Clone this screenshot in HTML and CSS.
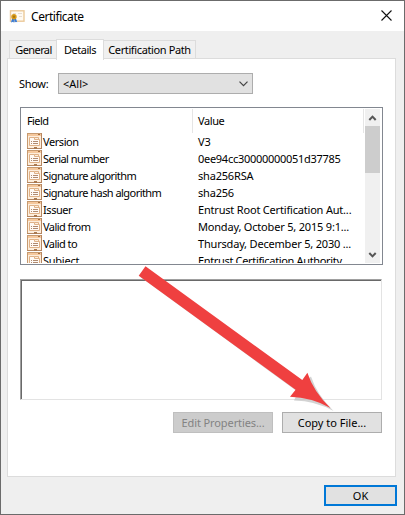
FILE: index.html
```html
<!DOCTYPE html>
<html lang="en">
<head>
<meta charset="utf-8">
<title>Certificate</title>
<link rel="stylesheet" href="styles.css">
</head>
<body>
<svg width="0" height="0" class="defs">
  <symbol id="field" viewBox="0 0 15 16">
    <rect x=".5" y=".5" width="14" height="15" fill="#fdeedd" stroke="#c79a70"/>
    <path d="M1 1h13v2H1z" fill="#f5c89d"/>
    <path d="M14.500 0v16M0 15.500h15" stroke="#b58661"/>
    <path d="M11 1.500h2" stroke="#a66d3c"/>
    <path d="M2.500 12.500v-8h5v2h5v6z" fill="#fffaf5" stroke="#dfb187"/>
    <path d="M7.500 4.500h4v2" fill="none" stroke="#dfb187"/>
    <path d="M4 8.500h1M6 8.500h5M4 10.500h1M6 10.500h5" stroke="#b08a70"/>
    <path d="M7 14h3v2H7z" fill="#a87850"/>
  </symbol>
</svg>
<main class="window">
  <header class="titlebar">
    <svg class="cert" width="16" height="14" viewBox="0 0 16 14">
      <rect x="1.5" y=".8" width="13.5" height="10.4" fill="#fffaf2" stroke="#ecc999" stroke-width="1.4"/>
      <path d="M4 3.500h3M9 3.500h4M10 6.500h3" stroke="#e5ddd3"/>
      <path d="M3.300 8 2 12.500l2-.8.8 1L5 9l.8 3.700.8-1 1.600.6L6.800 8z" fill="#3479d8"/>
      <circle cx="5" cy="6.8" r="2.7" fill="#d99a16"/><circle cx="5" cy="6.800" r="1.2" fill="#a97613"/>
    </svg>
    <h1 class="title">Certificate</h1>
    <svg class="close" width="11" height="11" viewBox="0 0 11 11"><path d="M.5.5l10 10M10.500.5l-10 10" stroke="#111" stroke-width="1.1"/></svg>
  </header>
  <nav class="tabs">
    <span class="tab general">General</span><span class="tab active">Details</span><span class="tab path">Certification Path</span>
  </nav>
  <section class="panel">
    <div class="show">
      <label>Show:</label>
      <div class="select"><span>&lt;All&gt;</span><svg width="9" height="6" viewBox="0 0 9 6"><path d="M.5.7l4 4 4-4" fill="none" stroke="#444" stroke-width="1.2"/></svg></div>
    </div>
    <div class="list">
      <div class="table">
        <div class="head"><span class="field">Field</span><span class="value">Value</span></div>
        <div class="row"><svg><use href="#field"/></svg><span class="name short">Version</span><span>V3</span></div>
        <div class="row"><svg><use href="#field"/></svg><span class="name">Serial number</span><span class="serial">0ee94cc30000000051d37785</span></div>
        <div class="row"><svg><use href="#field"/></svg><span class="name">Signature algorithm</span><span class="data">sha256RSA</span></div>
        <div class="row"><svg><use href="#field"/></svg><span class="name">Signature hash algorithm</span><span class="data">sha256</span></div>
        <div class="row"><svg><use href="#field"/></svg><span class="name short">Issuer</span><span class="data">Entrust Root Certification Aut...</span></div>
        <div class="row"><svg><use href="#field"/></svg><span class="name">Valid from</span><span class="data">Monday, October 5, 2015 9:1...</span></div>
        <div class="row"><svg><use href="#field"/></svg><span class="name">Valid to</span><span class="data">Thursday, December 5, 2030 ...</span></div>
        <div class="row"><svg><use href="#field"/></svg><span class="name subject">Subject</span><span class="authority">Entrust Certification Authority</span></div>
      </div>
      <div class="scrollbar">
        <svg width="15" height="17" viewBox="0 0 15 17"><path d="M4.300 11l3.200-3.400 3.200 3.400" fill="none" stroke="#555" stroke-width="2"/></svg>
        <div class="thumb"></div>
        <svg class="down" width="15" height="17" viewBox="0 0 15 17"><path d="M4.300 7l3.200 3.400L10.700 7" fill="none" stroke="#555" stroke-width="2"/></svg>
      </div>
    </div>
    <div class="detail"></div>
    <div class="actions"><button class="edit" disabled>Edit Properties...</button><button class="copy">Copy to File...</button></div>
  </section>
  <footer class="footer"><button class="ok">OK</button></footer>
</main>
<svg class="arrow" width="405" height="515" viewBox="0 0 405 515">
  <path d="M147 268.500L304 382L311 376.500Q317 395 333.500 411Q316 401 294 400.500L298 392L141 277.500Z" fill="#bbb" opacity=".65"/>
  <path d="M145.500 266.300L302.300 380L307.400 372.800Q313.500 392 330.500 408Q312 397.500 290 396.800L295.600 389.700L138.700 275.700Z" fill="#ef4040"/>
</svg>
</body>
</html>
```

FILE: styles.css
```css
* { box-sizing: border-box; }
body { margin: 0; font: 11px/17px "Noto Sans", "Open Sans", sans-serif; color: #000; background: #fff; overflow: hidden; }
.defs { position: absolute; }
.window { width: 405px; height: 515px; border: 1px solid #6b6b6b; background: #efefef; display: flex; flex-direction: column; }
.titlebar { height: 30px; flex: none; background: #fff; display: flex; align-items: center; padding: 0 12px 0 8px; }
.cert { margin-top: 2px; }
.title { margin: 0 auto 0 6px; font-size: 12px; font-weight: 400; letter-spacing: -.45px; }
.close { margin-top: -1px; }
.tabs { height: 28px; padding-left: 8px; display: flex; align-items: flex-end; position: relative; z-index: 1; flex: none; }
.tab { height: 18px; border: 1px solid #dcdcdc; border-bottom: 0; background: #f0f0f0; margin-bottom: 1px; line-height: 17px; text-align: center; white-space: nowrap; }
.general { width: 48px; border-right: 0; letter-spacing: -.6px; }
.active { width: 48px; height: 21px; background: #fff; margin: 0 0 -1px -1px; line-height: 19px; letter-spacing: -.5px; }
.path { width: 92px; border-left: 0; letter-spacing: -.38px; }
.panel { width: 389px; height: 419px; margin: -1px 0 0 6px; border: 1px solid #dcdcdc; background: #fff; padding: 14px 12px; flex: none; }
.show { height: 21px; display: flex; align-items: center; margin-left: -2px; }
.show label { width: 40px; padding-left: 1px; letter-spacing: -.3px; }
.select { width: 195px; height: 21px; border: 1px solid #adadad; background: #e1e1e1; display: flex; align-items: center; justify-content: space-between; padding: 0 4px; }
.list { width: 363px; height: 158px; margin-top: 13px; border: 1px solid #828790; padding: 1px; display: flex; }
.table { width: 343px; height: 154px; overflow: hidden; }
.head { height: 24px; display: flex; line-height: 24px; }
.field { width: 171px; padding-left: 5px; border-right: 1px solid #e5e5e5; letter-spacing: -.6px; }
.value { width: 171px; padding-left: 5px; border-right: 1px solid #e5e5e5; letter-spacing: -.4px; }
.row { height: 17px; display: flex; padding-left: 5px; white-space: nowrap; line-height: 18px; }
.row svg { width: 15px; height: 16px; flex: none; margin-right: 1px; }
.name { width: 155px; flex: none; letter-spacing: -.55px; }
.short { letter-spacing: -.43px; }
.subject { letter-spacing: -.25px; }
.serial { letter-spacing: -.28px; }
.data { letter-spacing: -.19px; }
.authority { letter-spacing: -.34px; }
.scrollbar { width: 16px; background: #f0f0f0; display: flex; flex-direction: column; border-right: 1px solid #fff; }
.thumb { height: 47px; background: #cdcdcd; }
.scrollbar svg { display: block; flex: none; }
.scrollbar .down { margin-top: auto; }
.detail { width: 362px; height: 121px; margin-top: 14px; border: 1px solid #e3e3e3; border-top-color: #a0a0a0; border-left-color: #a0a0a0; box-shadow: inset 1px 1px #696969; }
.actions { display: flex; justify-content: flex-end; gap: 9px; margin-top: 12px; padding-right: 1px; }
button { width: 100px; height: 21px; padding: 0; font: inherit; color: #000; border: 1px solid #adadad; background: #e1e1e1; white-space: nowrap; }
.edit { color: #838383; background: #ccc; border-color: #bfbfbf; letter-spacing: -.1px; }
.footer { display: flex; justify-content: flex-end; padding: 8px 7px 0 0; }
.ok { width: 73px; border: 2px solid #0078d7; }
.arrow { position: absolute; left: 0; top: 0; z-index: 2; pointer-events: none; }
```
